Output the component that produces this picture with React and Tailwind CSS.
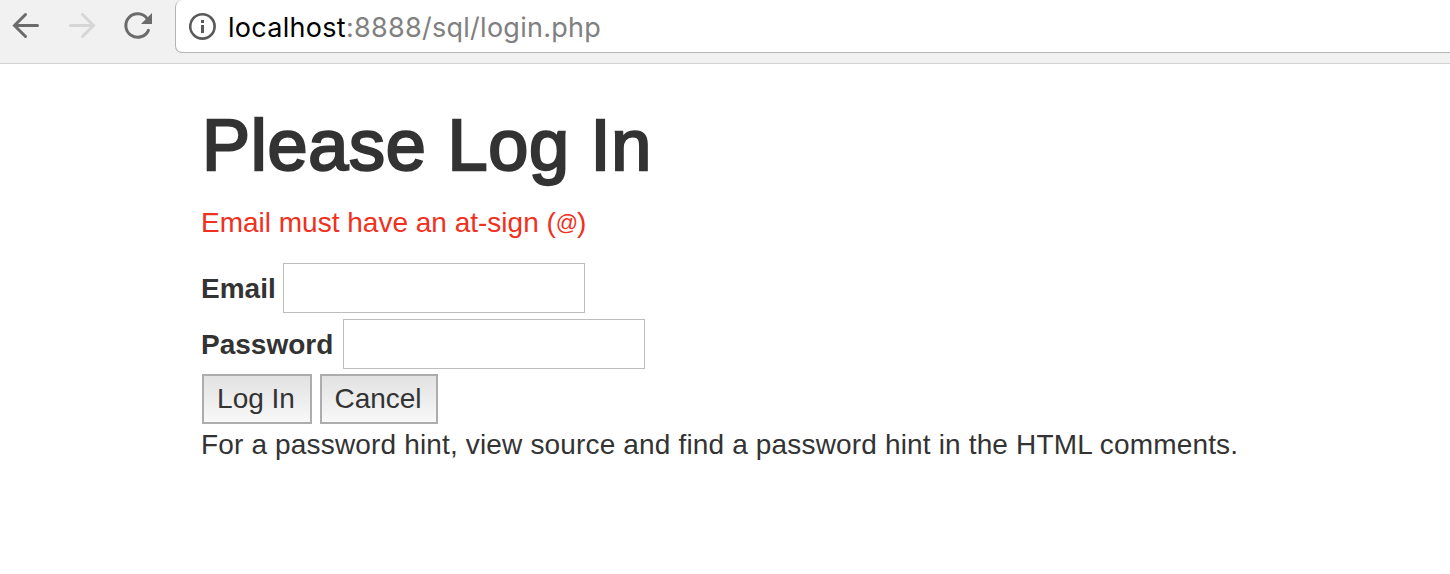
import React from "react";

function Toolbar() {
  return (
    <header className="flex h-16 items-start border-b border-[#d2d2d2] bg-[#f1f1f1]">
      <svg className="h-[52px] w-[175px] shrink-0" viewBox="0 0 175 52" fill="none" strokeWidth="3" strokeLinecap="round">
        <path d="M37.5 25.5H14.5M25.5 14.5L14.5 25.5L25.5 36.5" stroke="#6b6b6b" />
        <path d="M70.5 25.5H93.5M82.5 14.5L93.5 25.5L82.5 36.5" stroke="#d6d6d6" />
        <path d="M148.4 30.3A11.8 11.8 0 1 1 147 18.3" stroke="#6b6b6b" />
        <path d="M152 13V24H141Z" fill="#6b6b6b" />
      </svg>
      <div className="flex h-[53px] min-w-0 flex-1 items-center rounded-bl-[7px] rounded-tl-[7px] border-b border-l border-[#b4b4b4] bg-white pl-[13px]">
        <svg className="h-7 w-7 shrink-0" viewBox="0 0 28 28" fill="none">
          <circle cx="13.4" cy="14.4" r="12.2" stroke="#5a5a5a" strokeWidth="2.6" />
          <path d="M12 8H15V11H12ZM12 13H15V21H12Z" fill="#5a5a5a" />
        </svg>
        <span className="ml-[11px] whitespace-nowrap pt-0.5 font-['Inter',sans-serif] text-[27px] leading-[51px] tracking-[0.28px] text-[#808080]">
          <span className="text-black">localhost</span>:8888/sql/login.php
        </span>
      </div>
    </header>
  );
}

function Field({ label, type, labelClass }) {
  return (
    <label className="flex h-[50px] items-center font-bold">
      <span className={`pt-0.5 ${labelClass}`}>{label}</span>
      <input type={type} className="h-[50px] w-[302px] border border-[#bdbdbd] bg-white px-2 outline-none" />
    </label>
  );
}

function Button({ children, className }) {
  return (
    <button
      type="button"
      className={`h-[50px] border-2 border-[#adadad] bg-linear-to-b from-[#e2e2e2] to-[#f8f8f8] pr-0.5 text-center leading-[46px] ${className}`}
    >
      {children}
    </button>
  );
}

export default function App() {
  return (
    <div className="h-[574px] overflow-hidden bg-white font-['Liberation_Sans',Arial,sans-serif] text-[28px] text-[#333]">
      <Toolbar />
      <main className="pl-[201px] pt-[41px]">
        <h1 className="ml-px whitespace-nowrap text-[72px] leading-[80px] tracking-[0.75px] [-webkit-text-stroke:2.4px_#333]">
          Please Log In
        </h1>
        <p className="mt-[18px] whitespace-nowrap leading-[40px] text-[#f03020]">
          Email must have an at-sign (<span className="text-[22px] leading-none tracking-[-1.2px] align-[2px]">@</span>)
        </p>
        <form className="mt-5">
          <Field label="Email" type="text" labelClass="w-[82px]" />
          <div className="mt-1.5">
            <Field label="Password" type="password" labelClass="w-[142px]" />
          </div>
          <div className="ml-px mt-[5px] flex gap-2">
            <Button className="w-[110px]">Log In</Button>
            <Button className="w-[118px]">Cancel</Button>
          </div>
        </form>
        <p className="mt-px whitespace-nowrap leading-[40px] tracking-[0.16px]">
          For a password hint, view source and find a password hint in the HTML comments.
        </p>
      </main>
    </div>
  );
}
